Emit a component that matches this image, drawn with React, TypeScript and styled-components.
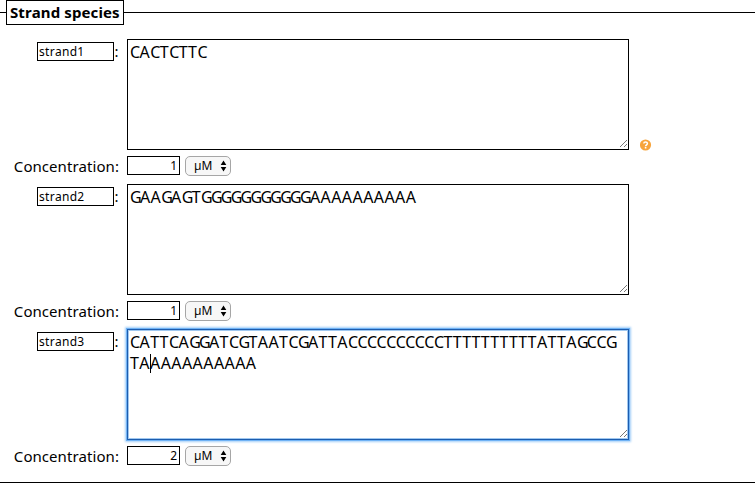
import React from "react";
import styled, { createGlobalStyle } from "styled-components";

const GlobalStyle = createGlobalStyle`
  * { box-sizing: border-box; }
  body {
    margin: 0;
    background: #fff;
    color: #000;
    font-family: "Noto Sans", "Open Sans", sans-serif;
    font-size: 15px;
    font-kerning: none;
    overflow: hidden;
  }
`;

const Section = styled.section`
  height: 483px;
  border-bottom: 1px solid #000;
`;

const Heading = styled.header`
  display: flex;
  align-items: center;
  height: 25px;
  &::before, &::after {
    content: "";
    height: 1px;
    background: #000;
  }
  &::before { width: 6px; }
  &::after { flex: 1; }
`;

const Title = styled.h2`
  width: 118px;
  height: 25px;
  margin: 0;
  padding-left: 3px;
  border: 1px solid #000;
  font-size: 15px;
  font-weight: 700;
  line-height: 23px;
  letter-spacing: 0.1px;
  white-space: nowrap;
`;

const Species = styled.div`
  display: grid;
  grid-template-columns: 119px 502px 1fr;
  grid-template-rows: 111px 20px;
  column-gap: 8px;
  row-gap: 6px;
  height: 145px;
`;

const SpeciesList = styled.div`
  padding-top: 14px;
`;

const NameCell = styled.div`
  display: flex;
  justify-content: flex-end;
  align-items: flex-start;
  padding-top: 3px;
  line-height: 18px;
`;

const NameField = styled.div`
  width: 77px;
  height: 19px;
  padding-left: 1px;
  border: 1px solid #000;
  font-size: 12px;
  line-height: 17px;
  letter-spacing: 0.3px;
`;

const Colon = styled.span`
  width: 5px;
  text-align: center;
`;

const SequenceArea = styled.div<{ $focused?: boolean }>`
  position: relative;
  height: 111px;
  padding: 2px;
  border: 1px solid ${(p) => (p.$focused ? "#1c5cae" : "#000")};
  box-shadow: ${(p) =>
    p.$focused
      ? "inset 0 0 0 1px rgba(65,145,225,.5), 0 0 0 1px #6fb2f5, 0 0 2px 2px #a5cff8"
      : "none"};
  font-size: 16px;
  line-height: 21px;
  white-space: nowrap;
`;

const Base = styled.span<{ $tracking: number }>`
  letter-spacing: ${(p) => p.$tracking}px;
`;

const Caret = styled.i`
  display: inline-block;
  width: 1px;
  height: 19px;
  margin-right: -1px;
  vertical-align: -4px;
  background: #000;
`;

const Grip = styled.svg`
  position: absolute;
  right: 1px;
  bottom: 1px;
`;

const HelpCell = styled.div`
  display: flex;
  align-items: flex-end;
  padding: 0 0 0 3px;
  margin-bottom: -1px;
`;

const Label = styled.div`
  text-align: right;
  line-height: 20px;
  letter-spacing: 0.05px;
  white-space: nowrap;
`;

const Amount = styled.div`
  display: flex;
  gap: 5px;
`;

const AmountField = styled.div`
  width: 53px;
  height: 19px;
  padding-right: 2px;
  border: 1px solid #000;
  font-size: 12px;
  line-height: 17px;
  text-align: right;
`;

const UnitSelect = styled.div`
  display: flex;
  align-items: center;
  justify-content: space-between;
  width: 46px;
  height: 20px;
  padding: 0 3px 0 8px;
  border: 1px solid #a6a6a6;
  border-radius: 5px;
  background: #f7f7f7;
  font-size: 12px;
  line-height: 18px;
`;

const tracking: Record<string, number> = { A: 0.42, C: -0.56, G: -1.75, T: 0.45 };

function Bases({ text }: { text: string }) {
  const runs = text.match(/(.)\1*/g) ?? [];
  return (
    <>
      {runs.map((run, i) => (
        <Base key={i} $tracking={tracking[run[0]]}>{run}</Base>
      ))}
    </>
  );
}

function ResizeGrip() {
  return (
    <Grip width="8" height="8" viewBox="0 0 8 8" shapeRendering="crispEdges">
      <path d="M0.5 7.5L7.5 0.5M4.5 7.5L7.5 4.5" stroke="#777" fill="none" />
    </Grip>
  );
}

function HelpIcon() {
  return (
    <svg width="12" height="12" viewBox="0 0 12 12">
      <circle cx="5.5" cy="6" r="5.6" fill="#f7a43c" />
      <path d="M3.8 4.6C3.8 2.5 7.4 2.5 7.4 4.5C7.4 5.8 5.6 5.8 5.6 7.3" stroke="#fff" strokeWidth="1.5" fill="none" />
      <rect x="4.8" y="8" width="1.6" height="1.5" fill="#fff" />
    </svg>
  );
}

function Arrows() {
  return (
    <svg width="7" height="12" viewBox="0 0 7 12">
      <path d="M3.5 0.5L6.3 5H0.7ZM3.5 11.5L6.3 7H0.7Z" fill="#000" />
    </svg>
  );
}

const species = [
  { name: "strand1", lines: ["CACTCTTC"], amount: 1, help: true },
  { name: "strand2", lines: ["GAAGAGTGGGGGGGGGGGAAAAAAAAAA"], amount: 1 },
  {
    name: "strand3",
    lines: ["CATTCAGGATCGTAATCGATTACCCCCCCCCCTTTTTTTTTTATTAGCCG", "TA|AAAAAAAAAA"],
    amount: 2,
    focused: true,
  },
];

export default function App() {
  return (
    <>
      <GlobalStyle />
      <Section>
        <Heading>
          <Title>Strand species</Title>
        </Heading>
        <SpeciesList>
          {species.map((s) => (
            <Species key={s.name}>
              <NameCell>
                <NameField>{s.name}</NameField>
                <Colon>:</Colon>
              </NameCell>
              <SequenceArea $focused={s.focused}>
                {s.lines.map((line) => {
                  const [before, after] = line.split("|");
                  return (
                    <div key={line}>
                      <Bases text={before} />
                      {after && <Caret />}
                      {after && <Bases text={after} />}
                    </div>
                  );
                })}
                <ResizeGrip />
              </SequenceArea>
              <HelpCell>{s.help && <HelpIcon />}</HelpCell>
              <Label>Concentration:</Label>
              <Amount>
                <AmountField>{s.amount}</AmountField>
                <UnitSelect>
                  µM
                  <Arrows />
                </UnitSelect>
              </Amount>
            </Species>
          ))}
        </SpeciesList>
      </Section>
    </>
  );
}
